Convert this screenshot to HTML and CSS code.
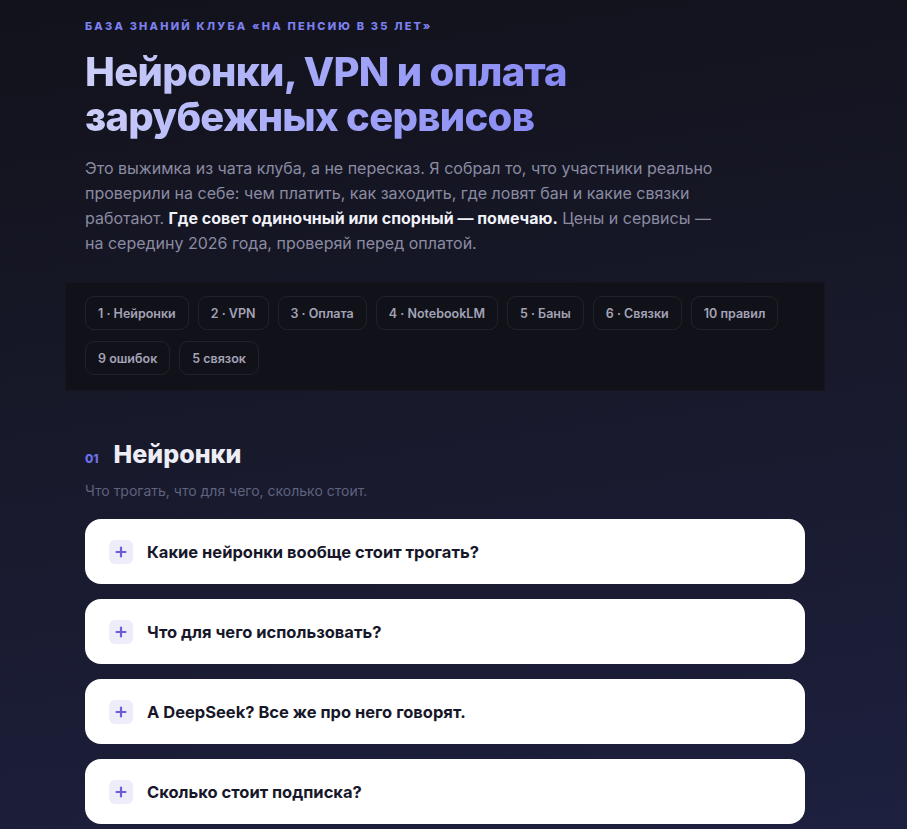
FILE: index.html
```html
<!DOCTYPE html>
<html lang="ru">
<head>
<meta charset="utf-8">
<title>База знаний</title>
<link rel="stylesheet" href="styles.css">
</head>
<body>
<div class="page">
  <header class="hero">
    <div class="eyebrow">База знаний клуба «На пенсию в 35 лет»</div>
    <h1 class="title">Нейронки, VPN и оплата<br>зарубежных сервисов</h1>
    <p class="lead">Это выжимка из чата клуба, а не пересказ. Я собрал то, что участники реально проверили на себе: чем платить, как заходить, где ловят бан и какие связки работают. <strong>Где совет одиночный или спорный — помечаю.</strong> Цены и сервисы — на середину 2026 года, проверяй перед оплатой.</p>
  </header>
  <nav class="toc">
    <a class="chip">1 · Нейронки</a>
    <a class="chip">2 · VPN</a>
    <a class="chip">3 · Оплата</a>
    <a class="chip">4 · NotebookLM</a>
    <a class="chip">5 · Баны</a>
    <a class="chip">6 · Связки</a>
    <a class="chip">10 правил</a>
    <a class="chip">9 ошибок</a>
    <a class="chip">5 связок</a>
  </nav>
  <section class="section">
    <div class="section-head">
      <span class="num">01</span>
      <h2 class="section-title">Нейронки</h2>
    </div>
    <p class="section-sub">Что трогать, что для чего, сколько стоит.</p>
    <div class="faq">
      <div class="card"><span class="plus"><svg viewBox="0 0 24 24" width="24" height="24"><path d="M12 7.5v9M7.5 12h9" stroke="#6b5fd8" stroke-width="2.2" stroke-linecap="round"/></svg></span><span class="q">Какие нейронки вообще стоит трогать?</span></div>
      <div class="card"><span class="plus"><svg viewBox="0 0 24 24" width="24" height="24"><path d="M12 7.5v9M7.5 12h9" stroke="#6b5fd8" stroke-width="2.2" stroke-linecap="round"/></svg></span><span class="q">Что для чего использовать?</span></div>
      <div class="card"><span class="plus"><svg viewBox="0 0 24 24" width="24" height="24"><path d="M12 7.5v9M7.5 12h9" stroke="#6b5fd8" stroke-width="2.2" stroke-linecap="round"/></svg></span><span class="q">А DeepSeek? Все же про него говорят.</span></div>
      <div class="card"><span class="plus"><svg viewBox="0 0 24 24" width="24" height="24"><path d="M12 7.5v9M7.5 12h9" stroke="#6b5fd8" stroke-width="2.2" stroke-linecap="round"/></svg></span><span class="q">Сколько стоит подписка?</span></div>
    </div>
  </section>
</div>
</body>
</html>
```

FILE: styles.css
```css
html, body {
  margin: 0;
  padding: 0;
}
body {
  min-height: 829px;
  background: linear-gradient(172deg, #12121b 0%, #171828 40%, #1b1d36 75%, #1d2140 100%);
  font-family: Inter, "Noto Sans", sans-serif;
  color: #e8e8f2;
}
.page {
  width: 760px;
  margin-left: 65px;
  padding-bottom: 40px;
}
.hero {
  padding: 19px 20px 0 20px;
}
.eyebrow {
  font-size: 11px;
  font-weight: 800;
  letter-spacing: 0.2em;
  text-transform: uppercase;
  color: #7d80f0;
  line-height: 14px;
}
.title {
  margin: 16px 0 0 0;
  font-size: 40px;
  font-weight: 800;
  line-height: 45px;
  letter-spacing: -0.018em;
  background: linear-gradient(100deg, #cdd0f7 0%, #a7aaf8 45%, #8587f3 100%);
  -webkit-background-clip: text;
  background-clip: text;
  color: transparent;
  width: max-content;
}
.lead {
  margin: 17px 0 0 0;
  max-width: 640px;
  font-size: 16px;
  line-height: 25px;
  color: #8b8ba2;
}
.lead strong {
  color: #f1f1f8;
  font-weight: 700;
}
.toc {
  margin-top: 26px;
  background: #111119;
  border: 1px solid rgba(255, 255, 255, 0.02);
  padding: 13px 19px 15px 19px;
  display: flex;
  flex-wrap: wrap;
  gap: 11px 9px;
}
.chip {
  display: flex;
  align-items: center;
  height: 34px;
  box-sizing: border-box;
  padding: 0 12px;
  border: 1px solid rgba(255, 255, 255, 0.07);
  border-radius: 9px;
  font-size: 12.5px;
  font-weight: 600;
  color: #a3a3b6;
}
.section {
  padding: 47px 20px 0 20px;
}
.section-head {
  display: flex;
  align-items: baseline;
  gap: 15px;
}
.num {
  font-size: 12px;
  font-weight: 800;
  color: #6e70e8;
}
.section-title {
  margin: 0;
  font-size: 25px;
  font-weight: 800;
  line-height: 32px;
  color: #ededf6;
}
.section-sub {
  margin: 12px 0 0 0;
  font-size: 14px;
  line-height: 18px;
  color: #5f627f;
}
.faq {
  margin-top: 19px;
  display: flex;
  flex-direction: column;
  gap: 15px;
}
.card {
  display: flex;
  align-items: center;
  gap: 14px;
  height: 65px;
  padding: 0 24px;
  background: #ffffff;
  border-radius: 16px;
}
.plus {
  width: 24px;
  height: 24px;
  border-radius: 6px;
  background: #ececfb;
  display: flex;
  flex-shrink: 0;
}
.q {
  font-size: 16.5px;
  font-weight: 700;
  color: #17172a;
}
```
